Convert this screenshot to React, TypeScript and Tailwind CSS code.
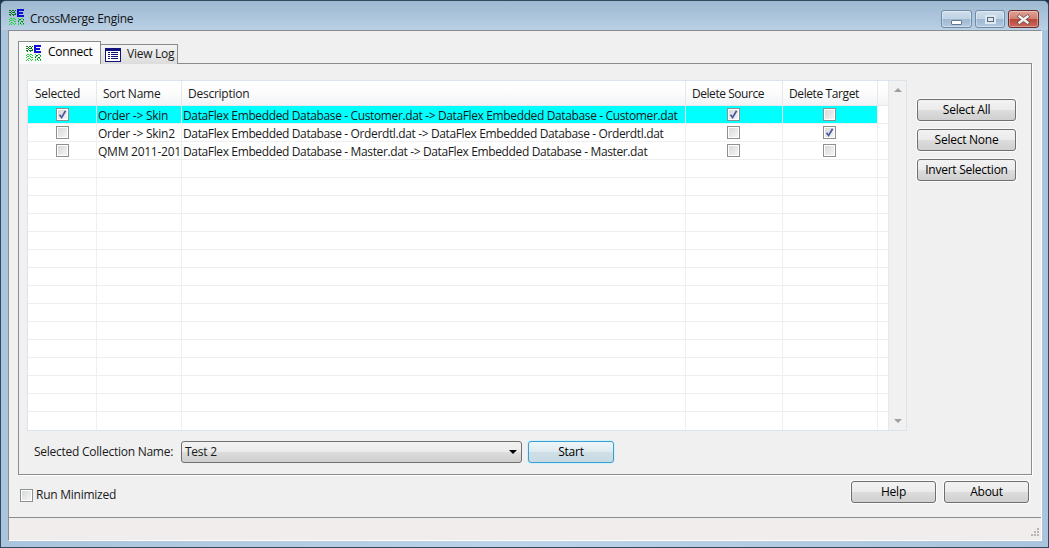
import React from "react";

const rows = [
  { selected: true, name: "Order -> Skin", desc: "DataFlex Embedded Database - Customer.dat -> DataFlex Embedded Database - Customer.dat", source: true, target: false },
  { selected: false, name: "Order -> Skin2", desc: "DataFlex Embedded Database - Orderdtl.dat -> DataFlex Embedded Database - Orderdtl.dat", source: false, target: true },
  { selected: false, name: "QMM 2011-201", desc: "DataFlex Embedded Database - Master.dat -> DataFlex Embedded Database - Master.dat", source: false, target: false },
];

const emptyRows = Array.from({ length: 15 }, (_, i) => i);

// pixel logo: green dotted squares + blue E
function AppIcon() {
  const dark = [
    [0, 1], [1, 1], [3, 1], [4, 1], [6, 1], [2, 2], [5, 2], [0, 3], [1, 3], [3, 3], [4, 3], [5, 3], [2, 4], [6, 4],
    [0, 5], [1, 5], [3, 5], [4, 5], [5, 5], [6, 5], [1, 6], [4, 6],
    [10, 10], [11, 10], [14, 10], [9, 12], [12, 12], [13, 12], [11, 14], [14, 14],
  ];
  const bright = [
    [1, 9], [2, 9], [4, 9], [5, 9], [0, 10], [3, 10], [6, 10], [1, 11], [2, 11], [4, 11], [0, 12], [5, 12], [6, 12],
    [2, 13], [3, 13], [1, 14], [4, 14], [6, 14], [0, 15], [2, 15], [5, 15],
    [9, 9], [12, 9], [13, 9], [9, 11], [10, 11], [14, 11], [11, 13], [13, 13], [9, 14], [9, 15], [12, 15], [14, 15],
  ];
  return (
    <svg width="16" height="16" viewBox="0 0 16 16" shapeRendering="crispEdges" className="shrink-0">
      {dark.map(([x, y], i) => (
        <rect key={i} x={x} y={y} width="1" height="1" fill="#0b7a22" />
      ))}
      {bright.map(([x, y], i) => (
        <rect key={i} x={x} y={y} width="1" height="1" fill="#1ed63a" />
      ))}
      <rect x="8" y="0" width="7" height="2" fill="#1010d0" />
      <rect x="8" y="0" width="2" height="8" fill="#1010d0" />
      <rect x="8" y="3" width="6" height="2" fill="#1010d0" />
      <rect x="8" y="6" width="7" height="2" fill="#1010d0" />
    </svg>
  );
}

function LogIcon() {
  return (
    <svg width="16" height="14" viewBox="0 0 16 14" shapeRendering="crispEdges" className="shrink-0">
      <rect x="0.5" y="0.5" width="15" height="13" fill="#fff" stroke="#12127a" />
      <rect x="1" y="1" width="14" height="2" fill="#12127a" />
      {[4, 6, 8, 10].map((y) => (
        <g key={y}>
          <rect x="3" y={y} width="2" height="1" fill="#12127a" />
          <rect x="6" y={y} width="7" height="1" fill="#12127a" />
        </g>
      ))}
    </svg>
  );
}

function Check({ checked }: { checked?: boolean }) {
  return (
    <div className="w-[13px] h-[13px] border border-[#8e8f8f] bg-white p-px shrink-0">
      <div className="w-full h-full bg-gradient-to-br from-[#d8d9da] to-[#f4f4f5] flex items-center justify-center">
        {checked && (
          <svg width="9" height="9" viewBox="0 0 9 9" className="shrink-0">
            <path d="M1.5 4.8 L3.6 7.5 L7.6 0.8" fill="none" stroke="#4a5a9c" strokeWidth="1.7" />
          </svg>
        )}
      </div>
    </div>
  );
}

function PushButton({ label, className }: { label: string; className: string }) {
  return (
    <button className={`h-[22px] rounded-[3px] border border-[#707070] bg-[linear-gradient(#f2f2f2_0%,#ebebeb_48%,#dddddd_50%,#cfcfcf_100%)] shadow-[0_0_0_1px_#fbfbfb] text-black text-center leading-[20px] ${className}`}>
      {label}
    </button>
  );
}

function CaptionButton({ className, children }: { className: string; children: React.ReactNode }) {
  return (
    <div className={`h-[18px] rounded-[3px] border flex items-center justify-center shadow-[inset_0_0_0_1px_rgba(255,255,255,0.35)] ${className}`}>
      {children}
    </div>
  );
}

export default function App() {
  return (
    <div className="w-[1049px] h-[548px] overflow-hidden bg-[#1d3448] font-['Open_Sans','Noto_Sans',sans-serif] text-[12px] tracking-[-0.25px] text-[#1a1a1a]">
      <div className="h-full flex flex-col border border-[#34495c] rounded-t-[6px] bg-[linear-gradient(90deg,#a9c4dc_0%,#bcd3e8_50%,#a9c4dc_100%)]">
        {/* title bar */}
        <div className="h-[29px] shrink-0 flex items-start bg-[linear-gradient(#9db8d1,#b9d0e5)] rounded-t-[5px] pl-[8px] pr-[9px]">
          <div className="mt-[8px]">
            <AppIcon />
          </div>
          <span className="ml-[5px] mt-[9px] leading-[18px] text-[#111]">CrossMerge Engine</span>
          <div className="ml-auto flex gap-[3px] mt-[9px]">
            <CaptionButton className="w-[31px] border-[#6f8ba6] bg-[linear-gradient(#cfdeeb_0%,#bfd3e5_48%,#9db8d1_52%,#b4cbe0_100%)]">
              <div className="w-[11px] h-[5px] mt-[6px] bg-white border border-[#66788c] rounded-[1px]" />
            </CaptionButton>
            <CaptionButton className="w-[30px] border-[#6f8ba6] bg-[linear-gradient(#cfdeeb_0%,#bfd3e5_48%,#9db8d1_52%,#b4cbe0_100%)]">
              <div className="w-[11px] h-[9px] border-[2px] border-[#dfe7ef] bg-[#5a6b7d] p-px">
                <div className="w-full h-full bg-[#dfe7ef]" />
              </div>
            </CaptionButton>
            <CaptionButton className="w-[31px] border-[#6a2f2c] bg-[linear-gradient(#e0a297_0%,#d37f72_48%,#b8473a_52%,#cb6a5e_100%)]">
              <svg width="15" height="11" viewBox="0 0 15 11" className="shrink-0">
                <path d="M2 1.5 L13 9.5 M13 1.5 L2 9.5" stroke="#5c4a48" strokeWidth="3.6" />
                <path d="M2.5 1.8 L12.5 9.2 M12.5 1.8 L2.5 9.2" stroke="#f4f1f0" strokeWidth="2.4" />
              </svg>
            </CaptionButton>
          </div>
        </div>

        {/* client */}
        <div className="flex-1 flex flex-col mx-[7px] mb-[7px] min-h-0 border-t border-l border-[#8a8d90] border-r-0 bg-[#f0f0f0] shadow-[1px_1px_0_#fff]">
          <div className="flex-1 flex flex-col px-[9px] pt-[10px] min-h-0 border-b border-[#8a8d90]">
            {/* tabs */}
            <div className="flex items-end h-[23px] shrink-0 relative z-10">
              <div className="h-[23px] w-[83px] flex items-center gap-[6px] pl-[7px] pb-[1px] bg-[#fbfbfb] border border-b-0 border-[#8a8d90] text-black">
                <AppIcon />
                <span className="-mt-px">Connect</span>
              </div>
              <div className="h-[20px] w-[77px] flex items-center gap-[6px] pl-[4px] bg-[linear-gradient(#f4f4f4,#dcdcdc)] border border-l-0 border-b-0 border-[#8a8d90]">
                <LogIcon />
                <span className="-mt-px">View Log</span>
              </div>
            </div>

            {/* tab pane */}
            <div className="h-[412px] shrink-0 -mt-px border border-[#8a8d90] bg-[#f0f0f0] shadow-[1px_1px_0_#fff] flex flex-col pl-[8px] pt-[16px]">
              <div className="flex">
                {/* grid */}
                <div className="w-[880px] h-[351px] border border-[#dde3eb] bg-white flex shrink-0">
                  <div className="flex-1 min-w-0 flex flex-col overflow-hidden">
                    <div className="h-[25px] shrink-0 flex border-b border-[#e6e8eb] bg-[linear-gradient(#ffffff_0%,#fdfdfd_45%,#f1f3f5_100%)] text-[#1a1a1a]">
                      <div className="w-[69px] pl-[7px] border-r border-[#e6e8eb] leading-[26px]">Selected</div>
                      <div className="w-[85px] pl-[6px] border-r border-[#e6e8eb] leading-[26px]">Sort Name</div>
                      <div className="w-[504px] pl-[6px] border-r border-[#e6e8eb] leading-[26px]">Description</div>
                      <div className="w-[97px] pl-[6px] border-r border-[#e6e8eb] leading-[26px] tracking-[-0.45px]">Delete Source</div>
                      <div className="w-[95px] pl-[6px] border-r border-[#e6e8eb] leading-[26px] tracking-[-0.4px]">Delete Target</div>
                    </div>
                    {rows.map((row, i) => (
                      <div key={i} className="h-[18px] shrink-0 flex border-b border-[#efefef]">
                        <div className={`w-[69px] flex items-center justify-center border-r border-[#efefef] ${i === 0 ? "bg-[#00ffff]" : ""}`}>
                          <Check checked={row.selected} />
                        </div>
                        <div className={`w-[85px] pl-[1px] border-r border-[#efefef] whitespace-nowrap leading-[19px] ${i === 0 ? "bg-[#00ffff]" : ""}`}>{row.name}</div>
                        <div className={`w-[504px] pl-[1px] border-r border-[#efefef] whitespace-nowrap leading-[19px] tracking-[-0.37px] ${i === 0 ? "bg-[#00ffff]" : ""}`}>{row.desc}</div>
                        <div className={`w-[97px] flex items-center justify-center pr-[2px] border-r border-[#efefef] ${i === 0 ? "bg-[#00ffff]" : ""}`}>
                          <Check checked={row.source} />
                        </div>
                        <div className={`w-[95px] flex items-center justify-center pr-[2px] border-r border-[#efefef] ${i === 0 ? "bg-[#00ffff]" : ""}`}>
                          <Check checked={row.target} />
                        </div>
                      </div>
                    ))}
                    {emptyRows.map((i) => (
                      <div key={i} className={`h-[18px] shrink-0 flex ${i < 14 ? "border-b border-[#efefef]" : ""}`}>
                        <div className="w-[69px] border-r border-[#efefef]" />
                        <div className="w-[85px] border-r border-[#efefef]" />
                        <div className="w-[504px] border-r border-[#efefef]" />
                        <div className="w-[97px] border-r border-[#efefef]" />
                        <div className="w-[95px] border-r border-[#efefef]" />
                      </div>
                    ))}
                  </div>
                  {/* scrollbar */}
                  <div className="w-[18px] shrink-0 bg-[#f1f1f1] border-l border-[#e8e8e8] flex flex-col items-center justify-between py-[7px]">
                    <div className="w-0 h-0 border-x-[4px] border-x-transparent border-b-[4px] border-b-[#a0a0a0]" />
                    <div className="w-0 h-0 border-x-[4px] border-x-transparent border-t-[4px] border-t-[#a0a0a0]" />
                  </div>
                </div>

                {/* side buttons */}
                <div className="flex flex-col gap-[8px] ml-[10px] pt-[19px]">
                  <PushButton label="Select All" className="w-[99px]" />
                  <PushButton label="Select None" className="w-[99px]" />
                  <PushButton label="Invert Selection" className="w-[99px]" />
                </div>
              </div>

              {/* collection row */}
              <div className="flex items-center mt-[10px] pl-[7px]">
                <span className="w-[147px] whitespace-nowrap">Selected Collection Name:</span>
                <div className="w-[341px] h-[22px] rounded-[3px] border border-[#707070] bg-[linear-gradient(#f2f2f2_0%,#ebebeb_48%,#dddddd_50%,#cfcfcf_100%)] flex items-center pl-[3px] pr-[4px]">
                  <span>Test 2</span>
                  <div className="ml-auto w-0 h-0 border-x-[4px] border-x-transparent border-t-[4px] border-t-black" />
                </div>
                <button className="ml-[6px] w-[86px] h-[22px] rounded-[3px] border border-[#3c9fd0] bg-[linear-gradient(#eef5f9_0%,#dfeaf0_48%,#cfdfe6_52%,#c8dae2_100%)] shadow-[0_0_0_1px_#d3f1fb] text-black leading-[20px]">
                  Start
                </button>
              </div>
            </div>

            {/* footer row */}
            <div className="flex items-start flex-1 mt-[6px] pr-[3px]">
              <div className="flex items-center mt-[5px] ml-[2px]">
                <Check />
                <span className="ml-[3px]">Run Minimized</span>
              </div>
              <PushButton label="Help" className="ml-auto w-[85px]" />
              <PushButton label="About" className="ml-[8px] w-[85px]" />
            </div>
          </div>

          {/* status bar */}
          <div className="h-[22px] shrink-0 bg-[#f1eded] relative">
            <svg width="12" height="12" viewBox="0 0 12 12" className="absolute right-[1px] bottom-[1px]" shapeRendering="crispEdges">
              {[[9, 1], [9, 4], [6, 4], [9, 7], [6, 7], [3, 7]].map(([x, y], i) => (
                <rect key={i} x={x} y={y} width="2" height="2" fill="#b4b4b4" />
              ))}
            </svg>
          </div>
        </div>
      </div>
    </div>
  );
}
